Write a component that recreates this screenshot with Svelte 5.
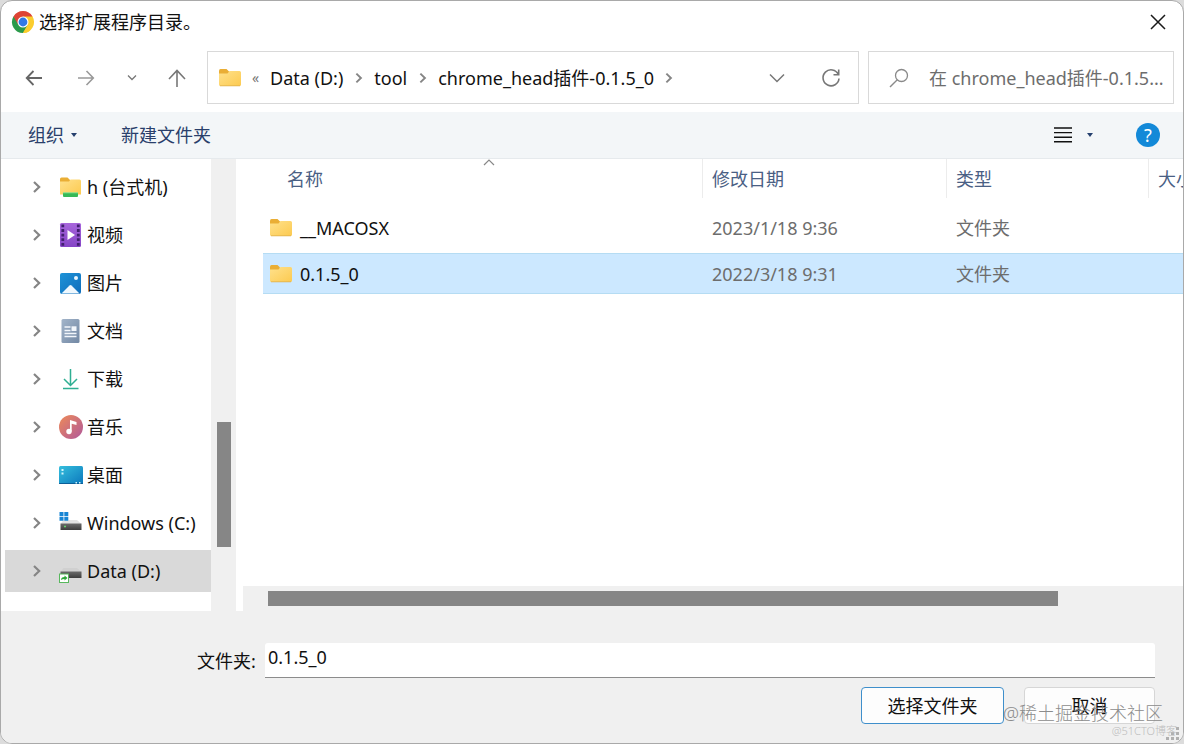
<script lang="ts">
	const places = [
		{ icon: 'network', name: 'h (台式机)' },
		{ icon: 'video', name: '视频' },
		{ icon: 'picture', name: '图片' },
		{ icon: 'document', name: '文档' },
		{ icon: 'download', name: '下载' },
		{ icon: 'music', name: '音乐' },
		{ icon: 'desktop', name: '桌面' },
		{ icon: 'windows', name: 'Windows (C:)' },
		{ icon: 'drive', name: 'Data (D:)' }
	];
	const crumbs = ['Data (D:)', 'tool', 'chrome_head插件-0.1.5_0'];
	const files = [
		{ name: '__MACOSX', date: '2023/1/18 9:36', type: '文件夹' },
		{ name: '0.1.5_0', date: '2022/3/18 9:31', type: '文件夹' }
	];

	let place = $state('Data (D:)');
	let selected = $state('0.1.5_0');
	let folder = $state('0.1.5_0');

	function pick(name: string) {
		selected = name;
		folder = name;
	}
</script>

{#snippet folderIcon()}
	<svg class="folder" width="22" height="18" viewBox="0 0 22 18" aria-hidden="true">
		<path d="M0 2q0-2 1.5-2h6l2.5 2.5V6H0z" fill="#eaae35" />
		<path d="M0 4.500h8.500L10.500 2H20.500q1.500 0 1.500 1.500V15.500q0 1.500-1.500 1.500h-19Q0 17 0 15.500z" fill="url(#yellow)" />
		<path d="M1 16.800h20" stroke="#deb04c" stroke-width="0.8" />
	</svg>
{/snippet}

{#snippet chevron(size: number)}
	<svg width={size} height={size} viewBox="0 0 16 16" aria-hidden="true">
		<path d="M5 3l5.200 5L5 13" fill="none" stroke="#858585" stroke-width="2.2" />
	</svg>
{/snippet}

<svg class="defs" width="0" height="0" aria-hidden="true">
	<defs>
		<linearGradient id="yellow" x1="0" y1="0" x2="1" y2="1">
			<stop offset="0" stop-color="#ffe18c" />
			<stop offset="1" stop-color="#fcca50" />
		</linearGradient>
		<linearGradient id="purple" x1="0" y1="0" x2="0" y2="1">
			<stop offset="0" stop-color="#a866dc" />
			<stop offset="1" stop-color="#8545c6" />
		</linearGradient>
		<linearGradient id="blue" x1="0" y1="0" x2="1" y2="1">
			<stop offset="0" stop-color="#1d93d8" />
			<stop offset="1" stop-color="#0f6dbb" />
		</linearGradient>
		<linearGradient id="slate" x1="0" y1="0" x2="1" y2="1">
			<stop offset="0" stop-color="#a3b5ca" />
			<stop offset="1" stop-color="#7288a4" />
		</linearGradient>
		<linearGradient id="pink" x1="0" y1="0" x2="1" y2="1">
			<stop offset="0" stop-color="#ee8b58" />
			<stop offset="1" stop-color="#b0589c" />
		</linearGradient>
		<linearGradient id="cyan" x1="0" y1="0" x2="1" y2="1">
			<stop offset="0" stop-color="#35bfdd" />
			<stop offset="1" stop-color="#0c78bd" />
		</linearGradient>
		<linearGradient id="metal" x1="0" y1="0" x2="0" y2="1">
			<stop offset="0" stop-color="#6b6b6b" />
			<stop offset="1" stop-color="#3c3c3c" />
		</linearGradient>
	</defs>
</svg>

<div class="dialog">
	<header class="titlebar">
		<svg width="24" height="24" viewBox="0 0 24 24" aria-hidden="true">
			<path d="M12 12L2.470 6.500A11 11 0 0 1 21.530 6.500z" fill="#dd4435" />
			<path d="M12 12L21.530 6.500A11 11 0 0 1 12 23z" fill="#fbcd2e" />
			<path d="M12 12L12 23A11 11 0 0 1 2.470 6.500z" fill="#2b9a4b" />
			<path d="M12 6.500h9.530L16.800 14.700z" fill="#fbcd2e" />
			<path d="M7.300 14.800L2.470 6.500 12 6.500z" fill="#dd4435" />
			<path d="M16.800 14.700L12 23 7.200 14.700z" fill="#2b9a4b" />
			<path d="M16.800 14.700L12 23a11 11 0 0 0 7-2.500z" fill="#fbcd2e" />
			<circle cx="12" cy="12" r="5.5" fill="#fff" />
			<circle cx="12" cy="12" r="4.4" fill="#3079e6" />
		</svg>
		<h1>选择扩展程序目录。</h1>
		<button class="close" aria-label="关闭">
			<svg width="18" height="18" viewBox="0 0 18 18"><path d="M2 2l14 14M16 2L2 16" stroke="#1a1a1a" stroke-width="1.5" /></svg>
		</button>
	</header>

	<nav class="navbar">
		<button class="arrow" aria-label="后退">
			<svg width="20" height="20" viewBox="0 0 20 20"><path d="M18 10H3M9.500 3L2.700 10l6.800 7" fill="none" stroke="#666" stroke-width="1.8" /></svg>
		</button>
		<button class="arrow" aria-label="前进">
			<svg width="20" height="20" viewBox="0 0 20 20"><path d="M2 10h15M10.500 3l6.800 7-6.800 7" fill="none" stroke="#999" stroke-width="1.6" /></svg>
		</button>
		<button class="recent" aria-label="最近浏览的位置">
			<svg width="10" height="10" viewBox="0 0 10 10"><path d="M1 2.500l4 4 4-4" fill="none" stroke="#777" stroke-width="1.3" /></svg>
		</button>
		<button class="up" aria-label="上移">
			<svg width="20" height="20" viewBox="0 0 20 20"><path d="M10 19V3M2 11l8-8.500 8 8.500" fill="none" stroke="#777" stroke-width="1.6" /></svg>
		</button>

		<div class="address">
			{@render folderIcon()}
			<span class="more">«</span>
			{#each crumbs as crumb}
				<button class="crumb">{crumb}</button>
				<span class="sep">{@render chevron(14)}</span>
			{/each}
			<button class="history" aria-label="以前的位置">
				<svg width="16" height="16" viewBox="0 0 16 16"><path d="M1 4.500l7 7 7-7" fill="none" stroke="#777" stroke-width="1.5" /></svg>
			</button>
			<button class="refresh" aria-label="刷新">
				<svg width="20" height="20" viewBox="0 0 20 20"><path d="M17.300 6.500A8 8 0 1 0 18 10.500M17.700 1.500v5.200h-5.200" fill="none" stroke="#777" stroke-width="1.6" /></svg>
			</button>
		</div>

		<label class="search">
			<svg width="20" height="20" viewBox="0 0 20 20" aria-hidden="true"><circle cx="12.5" cy="7.5" r="6" fill="none" stroke="#8a8a8a" stroke-width="1.3" /><path d="M8.300 11.800L1 19" stroke="#8a8a8a" stroke-width="1.4" /></svg>
			<input type="text" aria-label="搜索" placeholder="在 chrome_head插件-0.1.5..." />
		</label>
	</nav>

	<div class="toolbar">
		<button class="organize">组织 <i class="caret"></i></button>
		<button>新建文件夹</button>
		<button class="view" aria-label="更改视图">
			<svg width="18" height="16" viewBox="0 0 18 16"><path d="M0 1h18M0 5.600h18M0 10.200h18M0 14.800h18" stroke="#111" stroke-width="1.4" /></svg>
			<i class="caret"></i>
		</button>
		<button class="help" aria-label="帮助">?</button>
	</div>

	<main>
		<ul class="tree">
			{#each places as item}
				<li>
					<button class:active={place === item.name} onclick={() => (place = item.name)}>
						{@render chevron(16)}
						<svg class="icon" width="24" height="24" viewBox="0 0 24 24" aria-hidden="true">
							{#if item.icon === 'network'}
								<path d="M1 4q0-1.500 1.500-1.500h6L11 5v3H1z" fill="#eaae35" />
								<path d="M1 6.500h9L11.500 4.500H20.500q1.500 0 1.500 1.500V19.500H1z" fill="url(#yellow)" />
								<path d="M4 18h15v3q0 1-1 1H5q-1 0-1-1z" fill="#37b957" />
								<path d="M4 17.800h15" stroke="#7ee08f" />
							{:else if item.icon === 'video'}
								<rect x="1" width="21" height="24" rx="1.5" fill="url(#purple)" />
								<path d="M3.800 1.500v22M19.300 1.500v22" stroke="#42206f" stroke-width="2.8" stroke-dasharray="2.8 1.8" />
								<path d="M8.500 7v10l7.500-5z" fill="#fff" />
							{:else if item.icon === 'picture'}
								<rect x="1" y="2" width="21" height="21" rx="2" fill="url(#blue)" />
								<path d="M2.500 22.500l8-8q1-1 2 0l8 8z" fill="#eff8fe" />
								<circle cx="17" cy="7" r="2" fill="#e8f6ff" />
							{:else if item.icon === 'document'}
								<rect x="2.5" width="18" height="24" rx="1.5" fill="url(#slate)" />
								<path d="M5.500 8h6M5.500 11.500h6M5.500 14.500h12M5.500 17.500h12" stroke="#f2f6fb" stroke-width="1.3" />
								<rect x="12.5" y="7.3" width="5" height="4.7" fill="#f2f6fb" />
							{:else if item.icon === 'download'}
								<path d="M11.500 2v16M5 12l6.500 6.500L18 12M4 21.500h15.500" fill="none" stroke="#2fae92" stroke-width="1.5" />
							{:else if item.icon === 'music'}
								<circle cx="12" cy="12" r="12" fill="url(#pink)" />
								<circle cx="10" cy="16.5" r="2.7" fill="#fff" />
								<path d="M11 5l6.500 2v3L12.700 8.800V16.500H11z" fill="#fff" />
							{:else if item.icon === 'desktop'}
								<rect y="3" width="24" height="18" rx="1.5" fill="url(#cyan)" />
								<path d="M0 20h24v.500q0 .500-1 .500H1q-1 0-1-.500z" fill="#0b5f98" />
								<path d="M2.500 6h2v2h-2zM2.500 9.500h2v2h-2zM16.500 19h1.500v1.500h-1.500zM20 19h1.500v1.500H20z" fill="#d2f4fb" />
							{:else}
								<path d="M4.500 9h13.500l4.500 4H1.500z" fill={item.icon === 'drive' ? '#d0d0d0' : '#e2e2e2'} />
								<rect x="1.5" y="12.5" width="21" height="6.5" fill="url(#metal)" />
								{#if item.icon === 'windows'}
									<path d="M0 0h9.500v9.500H0z" fill="#fff" />
									<path d="M.500 1h4v4h-4zM5.300 1h4v4h-4zM.500 5.800h4v4h-4zM5.300 5.800h4v4h-4z" fill="#1785d4" />
									<path d="M5 15.500h2" stroke="#61d46a" stroke-width="1.5" />
								{:else}
									<rect x=".5" y="15" width="9" height="8.5" fill="#fff" stroke="#58b85d" />
									<path d="M2 21q0-3 3.500-3v-1.500L8.500 19l-3 2.500V20Q3.500 20 2 21z" fill="#2ca938" />
								{/if}
							{/if}
						</svg>
						<span>{item.name}</span>
					</button>
				</li>
			{/each}
		</ul>
		<div class="scroll-y"><div class="thumb"></div></div>

		<section class="content">
			<div class="list">
				<table>
					<thead>
						<tr>
							<th class="name">
								名称
								<svg class="sort" width="12" height="7" viewBox="0 0 12 7" aria-hidden="true"><path d="M1 6l5-5 5 5" fill="none" stroke="#888" stroke-width="1.2" /></svg>
							</th>
							<th class="date">修改日期</th>
							<th class="type">类型</th>
							<th class="size">大小</th>
						</tr>
					</thead>
					<tbody>
						{#each files as file}
							<tr class:selected={selected === file.name} onclick={() => pick(file.name)}>
								<td class="name"><div class="file">{@render folderIcon()}{file.name}</div></td>
								<td>{file.date}</td>
								<td>{file.type}</td>
								<td></td>
							</tr>
						{/each}
					</tbody>
				</table>
			</div>
			<div class="scroll-x"><div class="thumb"></div></div>
		</section>
	</main>

	<footer>
		<div class="field">
			<label for="folder">文件夹:</label>
			<input id="folder" type="text" bind:value={folder} />
		</div>
		<div class="actions">
			<button class="primary">选择文件夹</button>
			<button>取消</button>
		</div>
		<svg class="grip" width="14" height="14" viewBox="0 0 14 14" aria-hidden="true">
			<path d="M10 0h3v3h-3zM5 5h3v3H5zM10 5h3v3h-3zM0 10h3v3H0zM5 10h3v3H5zM10 10h3v3h-3z" fill="#b0b0b0" />
		</svg>
		<span class="mark">@稀土掘金技术社区</span>
		<span class="mark small">@51CTO博客</span>
	</footer>
</div>

<style>
	:global(body) {
		background: #dcdcdc;
	}
	.defs {
		position: absolute;
	}
	.dialog {
		display: flex;
		flex-direction: column;
		box-sizing: border-box;
		min-height: 100vh;
		border: 1px solid #a9a9a9;
		border-radius: 12px;
		overflow: hidden;
		background: #fff;
		color: #111;
		font: 18px/24px "Noto Sans", "Noto Sans CJK SC", sans-serif;
	}
	button {
		display: flex;
		align-items: center;
		justify-content: center;
		padding: 0;
		border: 0;
		background: none;
		color: inherit;
		font: inherit;
		white-space: nowrap;
	}
	input {
		min-width: 0;
		box-sizing: border-box;
		border: 0;
		outline: 0;
		background: none;
		color: inherit;
		font: inherit;
	}
	svg {
		flex: none;
	}

	.titlebar {
		display: flex;
		align-items: center;
		height: 41px;
		padding: 0 8px 0 10px;
	}
	h1 {
		flex: 1;
		margin: 0 0 0 4px;
		font-size: 18px;
		font-weight: 400;
	}
	.close {
		width: 34px;
		height: 34px;
	}

	.navbar {
		display: flex;
		padding: 9px 9px 8px 7px;
	}
	.arrow {
		width: 52px;
	}
	.recent {
		width: 40px;
	}
	.up {
		width: 50px;
	}
	.address,
	.search {
		display: flex;
		align-items: center;
		box-sizing: border-box;
		height: 53px;
		border: 1px solid #d9d9d9;
	}
	.address {
		flex: 1;
		margin: 0 9px 0 5px;
		padding: 0 10px 0 11px;
	}
	.more {
		width: 29px;
		text-align: center;
		color: #777;
		font-size: 14px;
	}
	.sep {
		display: flex;
		justify-content: center;
		width: 31px;
	}
	.history {
		width: 34px;
		height: 34px;
		margin-left: auto;
	}
	.refresh {
		width: 34px;
		height: 34px;
		margin-left: 20px;
	}
	.search {
		width: 306px;
		padding-left: 20px;
	}
	.search input {
		flex: 1;
		height: 34px;
		margin-left: 20px;
		padding: 0;
	}
	.search input::placeholder {
		color: #6d6d6d;
		opacity: 1;
	}

	.toolbar {
		display: flex;
		align-items: center;
		height: 46px;
		padding: 0 23px 0 27px;
		border-bottom: 1px solid #e6eaed;
		background: #f3f6f8;
		color: #2a3f6b;
	}
	.caret {
		border: 3px solid transparent;
		border-top: 4px solid #25406e;
		border-bottom: 0;
	}
	.organize {
		gap: 7px;
		margin-right: 44px;
	}
	.view {
		gap: 15px;
		height: 34px;
		margin: 0 43px 0 auto;
	}
	.help {
		width: 24px;
		height: 24px;
		border-radius: 50%;
		background: #1389d8;
		color: #fff;
	}

	main {
		display: flex;
		flex: 1;
		background: #f0f0f0;
	}
	.tree {
		width: 206px;
		margin: 0;
		padding: 7px 0 0 4px;
		background: #fff;
		list-style: none;
	}
	.tree li {
		margin-bottom: 6px;
	}
	.tree button {
		justify-content: flex-start;
		width: 100%;
		height: 42px;
		padding-left: 24px;
	}
	.tree button.active {
		background: #d9d9d9;
	}
	.tree .icon {
		margin: 0 4px 0 14px;
	}
	.thumb {
		background: #868686;
	}
	.scroll-y {
		display: flex;
		flex-direction: column;
		width: 13px;
		padding: 0 6px;
	}
	.scroll-y::before {
		content: '';
		flex: 263;
	}
	.scroll-y .thumb {
		flex: 125;
		width: 14px;
	}
	.scroll-y::after {
		content: '';
		flex: 64;
	}
	.content {
		display: flex;
		flex: 1;
		flex-direction: column;
		min-width: 0;
		background: #fff;
	}
	.list {
		flex: 1;
		padding-left: 27px;
		overflow: hidden;
	}
	.scroll-x {
		display: flex;
		height: 15px;
		margin-left: 7px;
		padding: 5px 0 5px 25px;
		background: #f0f0f0;
	}
	.scroll-x .thumb {
		flex: 790;
	}
	.scroll-x::after {
		content: '';
		flex: 125;
	}

	table {
		width: 100%;
		border-spacing: 0;
		table-layout: fixed;
	}
	th {
		box-sizing: border-box;
		height: 39px;
		padding: 0 0 0 9px;
		border-right: 1px solid #ececec;
		color: #4a6084;
		font-weight: 400;
		text-align: left;
		white-space: nowrap;
	}
	th.name {
		position: relative;
		padding-left: 24px;
	}
	th.date {
		width: 244px;
	}
	th.type {
		width: 202px;
	}
	th.size {
		width: 34px;
		border: 0;
	}
	.sort {
		position: absolute;
		top: 0;
		left: 50%;
	}
	tbody::before {
		content: '';
		display: block;
		height: 4px;
	}
	td {
		height: 41px;
		padding: 0 0 0 9px;
		border-top: 5px solid transparent;
		background-clip: padding-box;
		color: #6d6d6d;
	}
	td.name {
		padding-left: 7px;
		color: #111;
	}
	.file {
		display: flex;
		align-items: center;
		gap: 8px;
	}
	.selected td {
		background-color: #cce8ff;
		box-shadow: inset 0 1px #b5dcf3, inset 0 -1px #b5dcf3;
	}

	footer {
		position: relative;
		padding: 32px 28px 19px 196px;
		background: #f0f0f0;
	}
	.field {
		display: flex;
		align-items: center;
	}
	.field label {
		width: 68px;
	}
	.field input {
		flex: 1;
		height: 35px;
		padding: 0 3px 6px;
		border-bottom: 1px solid #8c8c8c;
		border-radius: 3px 3px 0 0;
		background: #fff;
	}
	.actions {
		display: flex;
		justify-content: flex-end;
		gap: 20px;
		margin-top: 9px;
	}
	.actions button {
		width: 131px;
		height: 37px;
		border: 1px solid #d6d6d6;
		border-radius: 4px;
		background: #fdfdfd;
	}
	.actions .primary {
		width: 143px;
		border-color: #3f8fcb;
	}
	.grip {
		position: absolute;
		right: 3px;
		bottom: 2px;
	}
	.mark {
		position: absolute;
		right: 20px;
		bottom: 18px;
		color: #8c8c8c;
		font-weight: 300;
		pointer-events: none;
	}
	.small {
		right: 6px;
		bottom: 0;
		color: #bdbdbd;
		font-size: 11px;
	}
</style>
